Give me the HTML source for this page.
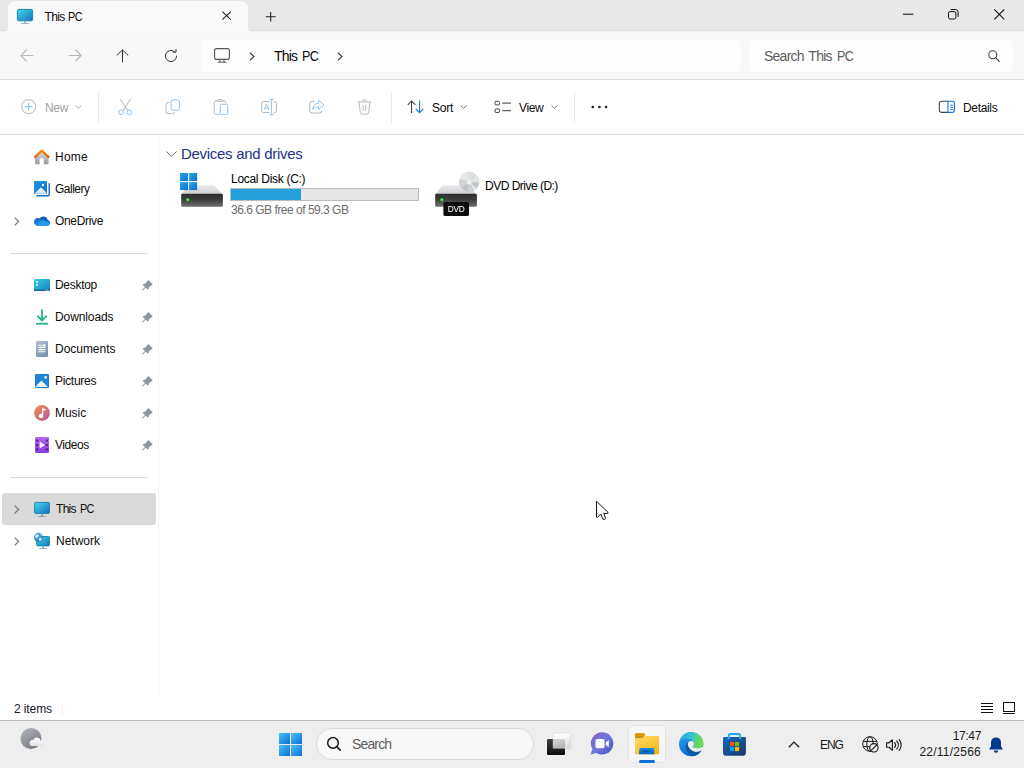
<!DOCTYPE html>
<html><head><meta charset="utf-8"><title>This PC</title>
<style>
*{box-sizing:border-box;margin:0;padding:0}
html,body{width:1024px;height:768px;overflow:hidden;background:#fff;font-family:"Liberation Sans",sans-serif;font-size:12px;color:#0c0c0c}
div,svg,span{position:absolute}
svg{overflow:visible}
#titlebar{left:0;top:0;width:1024px;height:32px;background:#e8e8e8;border-bottom:1px solid #f0f0f0;box-shadow:inset 0 -1px 0 #e1e1e1}
#tab{left:8px;top:1px;width:240px;height:31px;background:#f9f9f9;border-radius:7px 7px 0 0}
#tab:before,#tab:after{content:"";position:absolute;bottom:0;width:4px;height:4px;background:radial-gradient(circle at 0 0,rgba(249,249,249,0) 3.6px,#f9f9f9 4.1px)}
#tab:before{left:-4px}
#tab:after{right:-4px;transform:scaleX(-1)}
#navbar{z-index:2;left:0;top:32px;width:1024px;height:48px;background:#f8f8f8;border-bottom:1px solid #dddddd}
#addr{left:201px;top:8px;width:540px;height:32px;background:#fdfdfd;border-radius:5px}
#search{left:749px;top:8px;width:264px;height:32px;background:#fdfdfd;border-radius:5px}
#toolbar{z-index:2;left:0;top:80px;width:1024px;height:55px;background:#fff;border-bottom:1px solid #dadada}
#sidebar{left:0;top:134px;width:159px;height:563px;background:transparent;border-right:1px solid #f4f4f4}
#content{left:159px;top:134px;width:865px;height:562px;background:transparent}
#status{left:0;top:696px;width:1024px;height:24px;background:#fff}
#taskbar{left:0;top:720px;width:1024px;height:48px;background:#eeeeee;box-shadow:inset 0 1px 0 #bfbfbf}
.t{white-space:nowrap;line-height:16px;height:16px;font-size:12px}
.t span{position:static;display:inline-block;transform-origin:0 50%}
.sep{width:1px;background:#eaeaea}
.hsep{height:1px;background:#dcdcdc}
</style></head><body>

<!-- ===== TITLE BAR ===== -->
<div id="titlebar">
  <div id="tab"></div>
  <svg id="tabicon" style="left:16px;top:8px" width="18" height="18" viewBox="0 0 18 18">
    <defs><linearGradient id="gmon" x1="0" y1="0" x2="1" y2="1"><stop offset="0" stop-color="#3fdcea"/><stop offset="1" stop-color="#1a6fc0"/></linearGradient></defs>
    <rect x="1.400" y="1.400" width="15.200" height="11.400" rx="1.300" fill="url(#gmon)" stroke="#0f7fa6" stroke-width="0.900"/>
    <rect x="8" y="13" width="2" height="2.2" fill="#9fb6c8"/>
    <rect x="5" y="15" width="8" height="1" fill="#9fb6c8"/>
  </svg>
  <span class="t" style="left:44.500px;top:9px;letter-spacing:-0.600px;word-spacing:0.600px">This <span style="transform:scaleX(0.900)">PC</span></span>
  <svg style="left:222px;top:11px" width="10" height="10" viewBox="0 0 10 10"><path d="M0.400 0.600L8.800 8.600M8.800 0.600L0.400 8.600" stroke="#1f1f1f" stroke-width="1.050" fill="none"/></svg>
  <svg style="left:265px;top:11px" width="11" height="11" viewBox="0 0 11 11"><path d="M5.700 0.900V10.500M0.800 5.700H10.700" stroke="#1f1f1f" stroke-width="1.050" fill="none"/></svg>
  <svg style="left:903px;top:9px" width="11" height="11" viewBox="0 0 11 11"><path d="M0 5.200H10.300" stroke="#111" stroke-width="1.050" fill="none"/></svg>
  <svg style="left:948px;top:9px" width="11" height="11" viewBox="0 0 11 11"><rect x="0.5" y="2.6" width="7.4" height="7.4" rx="1.6" fill="none" stroke="#111" stroke-width="1"/><path d="M2.7 0.55H7.6A2.5 2.5 0 0 1 10.1 3.05V7.9" fill="none" stroke="#111" stroke-width="1"/></svg>
  <svg style="left:994px;top:9px" width="11" height="11" viewBox="0 0 11 11"><path d="M0.3 0.3L10.3 10.3M10.3 0.3L0.3 10.3" stroke="#111" stroke-width="1.1" fill="none"/></svg>
</div>

<!-- ===== NAV BAR ===== -->
<div id="navbar">
  <svg style="left:20px;top:17px" width="14" height="13" viewBox="0 0 14 13"><path d="M13 6.5H1.2M6.3 1L0.9 6.5L6.3 12" stroke="#b9b9b9" stroke-width="1.1" fill="none" stroke-linecap="round" stroke-linejoin="round"/></svg>
  <svg style="left:68px;top:17px" width="14" height="13" viewBox="0 0 14 13"><path d="M1 6.5H12.8M7.7 1L13.1 6.5L7.7 12" stroke="#b9b9b9" stroke-width="1.1" fill="none" stroke-linecap="round" stroke-linejoin="round"/></svg>
  <svg style="left:116px;top:17px" width="13" height="14" viewBox="0 0 13 14"><path d="M6.5 13V1.2M1 6.3L6.5 0.9L12 6.3" stroke="#333" stroke-width="1" fill="none" stroke-linecap="round" stroke-linejoin="round"/></svg>
  <svg style="left:164px;top:17px" width="14" height="14" viewBox="0 0 14 14"><path d="M12.6 7A5.6 5.6 0 1 1 10.2 2.4" stroke="#333" stroke-width="1" fill="none" stroke-linecap="round"/><path d="M10.6 0.6V3.4H7.8" stroke="#333" stroke-width="1" fill="none" stroke-linecap="round" stroke-linejoin="round" transform="translate(1.4,-0.2)"/></svg>
  <div id="addr">
    <svg style="left:13px;top:8px" width="16" height="15" viewBox="0 0 16 15"><rect x="0.6" y="0.6" width="14.8" height="10.8" rx="2" fill="none" stroke="#555" stroke-width="1.1"/><path d="M6 11.5V14M10 11.5V14M3.5 14.2H12.5" stroke="#555" stroke-width="1" fill="none"/></svg>
    <svg style="left:48px;top:12px" width="6" height="9" viewBox="0 0 6 9"><path d="M0.8 0.6L5 4.5L0.8 8.4" stroke="#333" stroke-width="1.1" fill="none"/></svg>
    <span class="t" style="left:73px;top:8px;font-size:14px;letter-spacing:-0.800px;word-spacing:1.200px">This <span style="transform:scaleX(0.900)">PC</span></span>
    <svg style="left:136px;top:12px" width="6" height="9" viewBox="0 0 6 9"><path d="M0.8 0.6L5 4.5L0.8 8.4" stroke="#333" stroke-width="1.1" fill="none"/></svg>
  </div>
  <div id="search">
    <span class="t" style="left:15px;top:8px;font-size:14px;letter-spacing:-0.750px;word-spacing:1.600px;color:#5d5d5d">Search This <span style="transform:scaleX(0.900)">PC</span></span>
    <svg style="left:239px;top:18px;top:10px" width="12" height="12" viewBox="0 0 12 12"><circle cx="4.8" cy="4.8" r="4" fill="none" stroke="#444" stroke-width="1.1"/><path d="M7.8 7.8L11.3 11.3" stroke="#444" stroke-width="1.2" stroke-linecap="round"/></svg>
  </div>
</div>

<div id="toolbar">
  <!-- New -->
  <svg style="left:21px;top:19px" width="16" height="16" viewBox="0 0 16 16"><circle cx="7.6" cy="7.6" r="7" fill="none" stroke="#b4b4b4" stroke-width="1"/><path d="M7.6 4V11.2M4 7.6H11.2" stroke="#8cc4ee" stroke-width="1.1" fill="none"/></svg>
  <span class="t" style="left:45px;top:20px;color:#a2a2a2;letter-spacing:-0.3px">New</span>
  <svg style="left:75px;top:25px" width="7" height="4" viewBox="0 0 7 4"><path d="M0.5 0.4L3.5 3.3L6.5 0.4" stroke="#a8a8a8" stroke-width="1" fill="none"/></svg>
  <div class="sep" style="left:98px;top:12px;height:31px"></div>
  <!-- Cut -->
  <svg style="left:118px;top:19px" width="15" height="17" viewBox="0 0 15 17"><path d="M2.2 0.3L9.6 11.4M12.4 0.3L5 11.4" stroke="#b4b4b4" stroke-width="1" fill="none"/><circle cx="3" cy="13.3" r="2.4" fill="none" stroke="#8cc4ee" stroke-width="1"/><circle cx="11.4" cy="13.3" r="2.4" fill="none" stroke="#8cc4ee" stroke-width="1"/></svg>
  <!-- Copy -->
  <svg style="left:165px;top:19px" width="16" height="16" viewBox="0 0 16 16"><path d="M4.4 3.6H3.2A2.2 2.2 0 0 0 1 5.8V12.4A2.2 2.2 0 0 0 3.2 14.6H7.6A2.2 2.2 0 0 0 9.6 13" fill="none" stroke="#b4b4b4" stroke-width="1"/><rect x="6" y="0.9" width="8.4" height="10.4" rx="2.2" fill="none" stroke="#8cc4ee" stroke-width="1"/></svg>
  <!-- Paste -->
  <svg style="left:213px;top:19px" width="16" height="17" viewBox="0 0 16 17"><path d="M6.4 15.4H3A2 2 0 0 1 1.2 13.6V3.6A2 2 0 0 1 3 1.8H4.2M9.8 1.8H11A2 2 0 0 1 12.8 3.6V4.6" fill="none" stroke="#b4b4b4" stroke-width="1"/><path d="M4.4 2.4A1.6 1.6 0 0 1 6 0.6H8A1.6 1.6 0 0 1 9.6 2.4Z" fill="none" stroke="#b4b4b4" stroke-width="1"/><rect x="7.2" y="5.3" width="7.6" height="10.2" rx="1.6" fill="none" stroke="#8cc4ee" stroke-width="1"/></svg>
  <!-- Rename -->
  <svg style="left:261px;top:19px" width="17" height="17" viewBox="0 0 17 17"><path d="M8.6 13.6H2.8A2.2 2.2 0 0 1 0.6 11.4V4.8A2.2 2.2 0 0 1 2.8 2.6H8.6M12.6 2.6H13.4A2.2 2.2 0 0 1 15.6 4.8V11.4A2.2 2.2 0 0 1 13.4 13.6H12.6" fill="none" stroke="#b4b4b4" stroke-width="1"/><path d="M10.6 0.3V15.8M8.6 0.4H12.6M8.6 15.7H12.6" stroke="#8cc4ee" stroke-width="1" fill="none"/><path d="M3.2 11L5.6 4.8L8 11M4 9.1H7.2" stroke="#8cc4ee" stroke-width="0.9" fill="none"/></svg>
  <!-- Share -->
  <svg style="left:309px;top:19px" width="16" height="16" viewBox="0 0 16 16"><path d="M5.6 2.4H3.2A2.4 2.4 0 0 0 0.8 4.8V11.6A2.4 2.4 0 0 0 3.2 14H10.4A2.4 2.4 0 0 0 12.8 11.6V11.2" fill="none" stroke="#b4b4b4" stroke-width="1"/><path d="M9.6 1.2L15 6L9.6 10.6V7.8C6.8 7.6 5 8.6 3.6 10.4C4 6.8 6 4.4 9.6 4Z" fill="none" stroke="#8cc4ee" stroke-width="1" stroke-linejoin="round"/></svg>
  <!-- Delete -->
  <svg style="left:357px;top:19px" width="16" height="16" viewBox="0 0 16 16"><path d="M0.6 3H14.4M5.4 2.8A2.1 2.1 0 0 1 9.6 2.8M2 3.2L3.3 13.6A1.8 1.8 0 0 0 5.1 15.2H9.9A1.8 1.8 0 0 0 11.7 13.6L13 3.2M6.2 6.4V12M8.8 6.4V12" fill="none" stroke="#b9b9b9" stroke-width="1"/></svg>
  <div class="sep" style="left:391px;top:12px;height:31px"></div>
  <!-- Sort -->
  <svg style="left:407px;top:20px" width="18" height="14" viewBox="0 0 18 14"><path d="M4.6 13V1M0.8 4.8L4.6 0.9L8.4 4.8" fill="none" stroke="#3a3a3a" stroke-width="1.05"/><path d="M12.6 0.6V12.6M8.8 8.8L12.6 12.7L16.4 8.8" fill="none" stroke="#1579d3" stroke-width="1.05"/></svg>
  <span class="t" style="left:432px;top:20px;letter-spacing:-0.2px">Sort</span>
  <svg style="left:460px;top:25px" width="7" height="4" viewBox="0 0 7 4"><path d="M0.5 0.4L3.5 3.3L6.5 0.4" stroke="#777" stroke-width="1" fill="none"/></svg>
  <!-- View -->
  <svg style="left:494px;top:20px" width="18" height="14" viewBox="0 0 18 14"><rect x="1" y="1.3" width="4.6" height="3.6" rx="1.3" fill="none" stroke="#3a3a3a" stroke-width="1"/><rect x="1" y="8.9" width="4.6" height="3.6" rx="1.3" fill="none" stroke="#3a3a3a" stroke-width="1"/><path d="M8.2 3.1H17M8.2 10.7H17" stroke="#3a3a3a" stroke-width="1"/></svg>
  <span class="t" style="left:519px;top:20px;letter-spacing:-0.35px">View</span>
  <svg style="left:551px;top:25px" width="7" height="4" viewBox="0 0 7 4"><path d="M0.5 0.4L3.5 3.3L6.5 0.4" stroke="#777" stroke-width="1" fill="none"/></svg>
  <div class="sep" style="left:574px;top:12px;height:31px"></div>
  <svg style="left:591px;top:25px" width="17" height="4" viewBox="0 0 17 4"><circle cx="1.8" cy="2" r="1.35" fill="#222"/><circle cx="8.4" cy="2" r="1.35" fill="#222"/><circle cx="15" cy="2" r="1.35" fill="#222"/></svg>
  <!-- Details -->
  <svg style="left:938px;top:20px" width="18" height="14" viewBox="0 0 18 14"><path d="M9.900 1.200H3.700A2.400 2.400 0 0 0 1.300 3.600V10A2.400 2.400 0 0 0 3.700 12.400H9.900" fill="none" stroke="#444" stroke-width="1.100"/><path d="M9.900 1.200H14.100A2.400 2.400 0 0 1 16.500 3.600V10A2.400 2.400 0 0 1 14.100 12.400H9.900Z" fill="none" stroke="#1579d3" stroke-width="1.100"/><path d="M12.300 5.200H14.900M12.300 7.350H14.900M12.300 9.500H14.900" stroke="#1579d3" stroke-width="1"/></svg>
  <span class="t" style="left:963px;top:20px;letter-spacing:-0.33px">Details</span>
</div>
<div id="sidebar">
  <!-- Home -->
  <svg style="left:34.300px;top:15px" width="16" height="16" viewBox="0 0 16 16"><defs><linearGradient id="gh" x1="0" y1="0" x2="0" y2="1"><stop offset="0" stop-color="#e2e2e2"/><stop offset="1" stop-color="#989898"/></linearGradient><linearGradient id="gr" gradientUnits="userSpaceOnUse" x1="0" y1="0.500" x2="0" y2="9"><stop offset="0" stop-color="#f89c1e"/><stop offset="1" stop-color="#de5a14"/></linearGradient></defs><path d="M1 7.600L7.800 1.800L14.600 7.600V14.100A1.200 1.200 0 0 1 13.400 15.300H9.800V9.300H5.600V15.300H2.200A1.200 1.200 0 0 1 1 14.100Z" fill="url(#gh)"/><path d="M1.100 7.900L7.800 1.700L14.500 7.900" fill="none" stroke="url(#gr)" stroke-width="2.300" stroke-linecap="round" stroke-linejoin="round"/></svg>
  <span class="t" style="left:55px;top:15px;letter-spacing:0.25px">Home</span>
  <!-- Gallery -->
  <svg style="left:34px;top:47px" width="17" height="16" viewBox="0 0 17 16"><defs><linearGradient id="ggal" x1="0" y1="0" x2="1" y2="1"><stop offset="0" stop-color="#2296e6"/><stop offset="1" stop-color="#1670cc"/></linearGradient><linearGradient id="gmt" x1="0" y1="0" x2="0" y2="1"><stop offset="0" stop-color="#ffffff"/><stop offset="1" stop-color="#c4e2f8"/></linearGradient></defs><path d="M15.250 2.300V13.400A1.400 1.400 0 0 1 13.850 14.800H2.400" fill="none" stroke="#1568c2" stroke-width="1.400"/><rect x="0" y="0" width="13" height="13" rx="1.100" fill="url(#ggal)"/><path d="M0.700 12.300L6.300 6.900A1 1 0 0 1 7.700 6.900L12.400 11.600V12A0.700 0.700 0 0 1 11.700 12.700H1.100A0.600 0.600 0 0 1 0.700 12.300Z" fill="url(#gmt)"/><rect x="8" y="2.900" width="2" height="2" fill="#fff"/></svg>
  <span class="t" style="left:55px;top:47px;letter-spacing:-0.5px">Gallery</span>
  <!-- OneDrive -->
  <svg style="left:14px;top:83px" width="6" height="9" viewBox="0 0 6 9"><path d="M0.7 0.6L4.6 4.5L0.7 8.4" stroke="#7c7c7c" stroke-width="1.3" fill="none"/></svg>
  <svg style="left:34px;top:81.200px" width="17" height="11" viewBox="0 0 17 11"><path d="M4.200 10.700H13.200A2.900 2.900 0 0 0 13.800 5A4.500 4.500 0 0 0 5.600 3.600A3.600 3.600 0 0 0 0.300 7.300A3.500 3.500 0 0 0 4.200 10.700Z" fill="#0c5fb6"/><path d="M5.600 3.600A3.600 3.600 0 0 0 0.300 7.300A3.500 3.500 0 0 0 1 9.200L8.600 5.200Z" fill="#1478d2"/><path d="M0.900 9L8.800 4.900L15.700 7.400A2.900 2.900 0 0 1 13.200 10.700H4.200A3.500 3.500 0 0 1 0.900 9Z" fill="#2298e8"/></svg>
  <span class="t" style="left:55px;top:79px;letter-spacing:-0.33px">OneDrive</span>
  <div class="hsep" style="left:10px;top:119px;width:138px"></div>
  <!-- Desktop -->
  <svg style="left:34px;top:145px" width="16" height="12" viewBox="0 0 16 12"><defs><linearGradient id="gd" x1="0" y1="0" x2="1" y2="1"><stop offset="0" stop-color="#34cde6"/><stop offset="1" stop-color="#1480c0"/></linearGradient></defs><rect x="0" y="0" width="16" height="12" rx="1.4" fill="url(#gd)"/><rect x="0" y="10.6" width="16" height="1.4" fill="#106a98"/><rect x="2" y="2.2" width="1.8" height="1.6" fill="#fff"/><rect x="2" y="5.2" width="1.8" height="1.6" fill="#fff"/><rect x="11.6" y="10.8" width="1" height="1" fill="#cfe8f8"/><rect x="13.4" y="10.8" width="1" height="1" fill="#cfe8f8"/></svg>
  <span class="t" style="left:55px;top:143px;letter-spacing:-0.3px">Desktop</span><svg style="left:142px;top:146px" width="11" height="11" viewBox="0 0 11 11"><path d="M6.3 0L10.7 4.3L8.8 6L7.1 7L6.3 9.4L5.4 9.4L3.7 7.6L0.9 10.4L0.2 9.7L3 6.9L0.9 4.9L0.9 4.2L3.4 3.4L4.6 1.7Z" fill="#8e999f"/></svg>
  <!-- Downloads -->
  <svg style="left:36px;top:175px" width="12" height="16" viewBox="0 0 12 16"><path d="M6 0.400V11.200M1.300 6.800L6 11.500L10.700 6.800" fill="none" stroke="#1eb68a" stroke-width="1.800"/><rect x="0" y="13.800" width="12" height="1.800" fill="#1eb68a"/></svg>
  <span class="t" style="left:55px;top:175px;letter-spacing:-0.1px">Downloads</span><svg style="left:142px;top:178px" width="11" height="11" viewBox="0 0 11 11"><path d="M6.3 0L10.7 4.3L8.8 6L7.1 7L6.3 9.4L5.4 9.4L3.7 7.6L0.9 10.4L0.2 9.7L3 6.9L0.9 4.9L0.9 4.2L3.4 3.4L4.6 1.7Z" fill="#8e999f"/></svg>
  <!-- Documents -->
  <svg style="left:36px;top:207px" width="12" height="16" viewBox="0 0 12 16"><defs><linearGradient id="gdoc" x1="0" y1="0" x2="0.6" y2="1"><stop offset="0" stop-color="#b2c2d4"/><stop offset="1" stop-color="#7b90ab"/></linearGradient></defs><rect x="0" y="0" width="12" height="16" rx="1.2" fill="url(#gdoc)"/><path d="M2.4 4.2H5.6M2.4 6.4H9.6M2.4 8.6H9.6M2.4 10.8H9.6" stroke="#fff" stroke-width="1.1"/><rect x="6.6" y="3.4" width="3" height="2" fill="#fff"/></svg>
  <span class="t" style="left:55px;top:207px;letter-spacing:-0.03px">Documents</span><svg style="left:142px;top:210px" width="11" height="11" viewBox="0 0 11 11"><path d="M6.3 0L10.7 4.3L8.8 6L7.1 7L6.3 9.4L5.4 9.4L3.7 7.6L0.9 10.4L0.2 9.7L3 6.9L0.9 4.9L0.9 4.2L3.4 3.4L4.6 1.7Z" fill="#8e999f"/></svg>
  <!-- Pictures -->
  <svg style="left:35px;top:240px" width="14" height="14" viewBox="0 0 14 14"><rect x="0" y="0" width="14" height="14" rx="1.3" fill="#1f86d8"/><path d="M0.4 12.8L6.4 6.6L13.4 13.4A1.3 1.3 0 0 1 12.7 14H1.3A1.3 1.3 0 0 1 0.4 12.8Z" fill="#eef6fd"/><circle cx="10.6" cy="3.4" r="1.3" fill="#fff"/><rect x="0.5" y="0.5" width="13" height="13" rx="1" fill="none" stroke="#1b7ad0" stroke-width="1"/></svg>
  <span class="t" style="left:55px;top:239px;letter-spacing:-0.28px">Pictures</span><svg style="left:142px;top:242px" width="11" height="11" viewBox="0 0 11 11"><path d="M6.3 0L10.7 4.3L8.8 6L7.1 7L6.3 9.4L5.4 9.4L3.7 7.6L0.9 10.4L0.2 9.7L3 6.9L0.9 4.9L0.9 4.2L3.4 3.4L4.6 1.7Z" fill="#8e999f"/></svg>
  <!-- Music -->
  <svg style="left:34px;top:271px" width="16" height="16" viewBox="0 0 16 16"><defs><linearGradient id="gmu" x1="0" y1="0" x2="1" y2="1"><stop offset="0" stop-color="#f28e3e"/><stop offset="1" stop-color="#b85aa8"/></linearGradient></defs><circle cx="8" cy="8" r="7.9" fill="url(#gmu)"/><path d="M8.100 2.900L11.400 3.900V5.800L9.300 5.200V10.800A2.200 2.200 0 1 1 8.100 8.900Z" fill="#fff"/></svg>
  <span class="t" style="left:55px;top:271px;letter-spacing:-0.04px">Music</span><svg style="left:142px;top:274px" width="11" height="11" viewBox="0 0 11 11"><path d="M6.3 0L10.7 4.3L8.8 6L7.1 7L6.3 9.4L5.4 9.4L3.7 7.6L0.9 10.4L0.2 9.7L3 6.9L0.9 4.9L0.9 4.2L3.4 3.4L4.6 1.7Z" fill="#8e999f"/></svg>
  <!-- Videos -->
  <svg style="left:35px;top:303px" width="14" height="16" viewBox="0 0 14 16"><defs><linearGradient id="gv" x1="0" y1="0" x2="0" y2="1"><stop offset="0" stop-color="#b268f4"/><stop offset="1" stop-color="#8a3cd8"/></linearGradient></defs><rect x="0" y="0" width="14" height="16" rx="1.3" fill="url(#gv)"/><path d="M4.6 4.6L10.2 8L4.6 11.4Z" fill="#f3e8fc"/><g fill="#45208c"><rect x="1.200" y="2.600" width="2" height="2"/><rect x="1.200" y="7" width="2" height="2"/><rect x="1.200" y="11.400" width="2" height="2"/><rect x="10.800" y="2.600" width="2" height="2"/><rect x="10.800" y="7" width="2" height="2"/><rect x="10.800" y="11.400" width="2" height="2"/></g></svg>
  <span class="t" style="left:55px;top:303px;letter-spacing:-0.44px">Videos</span><svg style="left:142px;top:306px" width="11" height="11" viewBox="0 0 11 11"><path d="M6.3 0L10.7 4.3L8.8 6L7.1 7L6.3 9.4L5.4 9.4L3.7 7.6L0.9 10.4L0.2 9.7L3 6.9L0.9 4.9L0.9 4.2L3.4 3.4L4.6 1.7Z" fill="#8e999f"/></svg>
  <div class="hsep" style="left:10px;top:343px;width:138px"></div>
  <!-- This PC (selected) -->
  <div style="left:2px;top:359px;width:154px;height:32px;background:#dadada;border-radius:3px"></div>
  <svg style="left:14px;top:371px" width="6" height="9" viewBox="0 0 6 9"><path d="M0.7 0.6L4.6 4.5L0.7 8.4" stroke="#7c7c7c" stroke-width="1.3" fill="none"/></svg>
  <svg style="left:34px;top:368px" width="16" height="15" viewBox="0 0 16 15"><rect x="0.600" y="0.400" width="14.800" height="11" rx="1.200" fill="url(#gmon)" stroke="#0f7fa6" stroke-width="0.900"/><rect x="7" y="11.800" width="2" height="2.400" fill="#94a8b8"/><rect x="4" y="14" width="8" height="1" fill="#94a8b8"/></svg>
  <span class="t" style="left:56px;top:367px;letter-spacing:-0.700px;word-spacing:1.600px">This <span style="transform:scaleX(0.900)">PC</span></span>
  <!-- Network -->
  <svg style="left:14px;top:403px" width="6" height="9" viewBox="0 0 6 9"><path d="M0.7 0.6L4.6 4.5L0.7 8.4" stroke="#7c7c7c" stroke-width="1.3" fill="none"/></svg>
  <svg style="left:34px;top:398px" width="17" height="17" viewBox="0 0 17 17"><defs><radialGradient id="gglobe" cx="0.350" cy="0.300" r="0.800"><stop offset="0" stop-color="#6fb6e8"/><stop offset="1" stop-color="#1f6fb4"/></radialGradient></defs><rect x="2.700" y="4.500" width="12.800" height="9.400" rx="1.100" fill="url(#gmon)" stroke="#0f7fa6" stroke-width="0.900"/><rect x="8.200" y="14.300" width="1.800" height="2" fill="#94a8b8"/><rect x="5.300" y="16" width="7.600" height="1" fill="#94a8b8"/><circle cx="4.500" cy="5.400" r="4.600" fill="url(#gglobe)"/><path d="M1.600 3.200C2.800 2 4.400 2.400 4.600 3.600C4.800 4.800 3.200 5 2.400 6.200C1.600 6.400 0.800 4.400 1.600 3.200ZM5.200 6.400C6.400 5.600 7.800 6 8.200 6.800C7.800 8 7 8.800 5.800 9.200C4.800 8.400 4.600 7 5.200 6.400ZM6.200 1.600C7.200 1.800 8 2.600 8.400 3.600C7.600 3.800 6.600 3.200 6.200 1.600Z" fill="#e4f0fa" fill-opacity="0.900"/></svg>
  <span class="t" style="left:56px;top:399px;letter-spacing:0px">Network</span>
</div>
<div id="content">
  <svg style="left:7px;top:17px" width="11" height="6" viewBox="0 0 11 6"><path d="M0.5 0.5L5.5 5.4L10.5 0.5" fill="none" stroke="#6a6a6a" stroke-width="1"/></svg>
  <span class="t" style="left:22px;top:10px;font-size:15px;line-height:20px;height:20px;color:#1e3287;letter-spacing:-0.29px">Devices and drives</span>
  <!-- Local Disk C -->
  <svg style="left:21px;top:38px" width="44" height="36" viewBox="0 0 44 36">
    <defs>
      <linearGradient id="gtop" x1="0" y1="0" x2="0" y2="1"><stop offset="0" stop-color="#e9eaec"/><stop offset="1" stop-color="#cfd1d4"/></linearGradient>
      <linearGradient id="gfront" x1="0" y1="0" x2="0" y2="1"><stop offset="0" stop-color="#2c2c2c"/><stop offset="0.450" stop-color="#3c3c3c"/><stop offset="1" stop-color="#707070"/></linearGradient><radialGradient id="gled" cx="0.5" cy="0.5" r="0.5"><stop offset="0" stop-color="#7dff7a"/><stop offset="0.550" stop-color="#2fd634"/><stop offset="1" stop-color="#1f9e26" stop-opacity="0.600"/></radialGradient>
      <linearGradient id="gwin" x1="0" y1="0" x2="1" y2="1"><stop offset="0" stop-color="#2aa6ea"/><stop offset="1" stop-color="#0b6fce"/></linearGradient>
    </defs>
    <path d="M8.500 13.300H33.800L42.400 22H1.500Z" fill="url(#gtop)"/>
    <rect x="1.200" y="21.700" width="41.700" height="13" rx="1.300" fill="url(#gfront)"/>
    <circle cx="7.800" cy="27.800" r="2" fill="url(#gled)"/>
    <rect x="0" y="1" width="8" height="8" fill="url(#gwin)"/><rect x="9.100" y="1" width="8" height="8" fill="url(#gwin)"/><rect x="0" y="10.100" width="8" height="8" fill="url(#gwin)"/><rect x="9.100" y="10.100" width="8" height="8" fill="url(#gwin)"/>
  </svg>
  <span class="t" style="left:72px;top:37px;letter-spacing:-0.29px;color:#000">Local Disk (C:)</span>
  <div style="left:71px;top:54px;width:189px;height:13px;background:#e6e6e6;border:1px solid #bcbcbc"><div style="left:0;top:0;width:70px;height:11px;background:#26a0da"></div></div>
  <span class="t" style="left:72px;top:68px;letter-spacing:-0.49px;color:#6d6d6d">36.6 GB free of 59.3 GB</span>
  <!-- DVD Drive D -->
  <svg style="left:275px;top:36px;will-change:transform" width="46" height="46" viewBox="0 0 46 46">
    <defs><radialGradient id="gdisc" cx="0.5" cy="0.5" r="0.5"><stop offset="0" stop-color="#fff"/><stop offset="0.22" stop-color="#f4f4f4"/><stop offset="0.26" stop-color="#c9c9c9"/><stop offset="1" stop-color="#e3e3e3"/></radialGradient></defs>
    <path d="M8.500 15.300H33.800L42.400 24H1.500Z" fill="url(#gtop)"/>
    <g transform="translate(0,0.500)"><circle cx="35.200" cy="11.400" r="9.800" fill="#d6d8da" stroke="#c6c8ca" stroke-width="0.500"/>
    <path d="M35.200 11.400L25.500 10A9.800 9.800 0 0 1 33 1.850Z" fill="#e6e7e8"/>
    <path d="M35.200 11.400L33 1.850A9.800 9.800 0 0 1 41.500 3.900Z" fill="#dddfe0"/>
    <path d="M35.200 11.400L41.500 3.900A9.800 9.800 0 0 1 45 11.800Z" fill="#e2e4e5"/>
    <path d="M35.200 11.400L45 11.800A9.800 9.800 0 0 1 42.300 18.150Z" fill="#c4c7c9"/>
    <path d="M35.200 11.400L42.300 18.150A9.800 9.800 0 0 1 40.600 19.600Z" fill="#f4f5f5"/>
    <path d="M35.200 11.400L40.600 19.600A9.800 9.800 0 0 1 33.500 21.050Z" fill="#cfd2d4"/>
    <path d="M35.200 11.400L33.500 21.050A9.800 9.800 0 0 1 27.200 17.100Z" fill="#c2c5c7"/>
    <path d="M35.200 11.400L27.200 17.100A9.800 9.800 0 0 1 25.500 10Z" fill="#d2d4d6"/>
    <path d="M33 10.800L26 9.200" stroke="#ee9ade" stroke-width="0.700"/><path d="M37 9.600L41.300 4.600" stroke="#a6ecb6" stroke-width="0.700"/>
    <circle cx="35.200" cy="11.400" r="2.900" fill="#f6f6f6" stroke="#c9cbcd" stroke-width="0.600"/><circle cx="35.200" cy="11.400" r="1.200" fill="#e4e5e6"/></g>
    <rect x="1.200" y="23.700" width="41.700" height="13" rx="1.300" fill="url(#gfront)"/>
    <circle cx="7.800" cy="29.800" r="2" fill="url(#gled)"/>
    <rect x="9.400" y="32" width="25.600" height="14" rx="1.600" fill="#0d0d0d"/>
    <text x="22.200" y="42.200" font-family="Liberation Sans,sans-serif" font-size="8.300" fill="#fff" text-anchor="middle" letter-spacing="-0.200">DVD</text>
  </svg>
  <span class="t" style="left:326px;top:44px;letter-spacing:-0.51px;color:#000">DVD Drive (D:)</span>
  <!-- cursor -->
  <svg style="left:436px;top:366px" width="14" height="21" viewBox="0 0 14 21"><path d="M1.500 1.300V17.300H2.700L5.700 14L8 19.200L9.600 19.500L10.600 18.100L8.700 13.400H12.900V12.200Z" fill="#fff" stroke="#14141e" stroke-width="1" stroke-linejoin="round"/></svg>
</div>
<div id="status">
  <span class="t" style="left:14px;top:5px;letter-spacing:-0.11px;color:#14142a">2 items</span>
  <div class="sep" style="left:62px;top:7px;height:11px;background:#ededed"></div>
  <svg style="left:981px;top:7px" width="12" height="11" viewBox="0 0 12 11"><path d="M0 0.500H12M0 3.500H12M0 6.500H12M0 9.500H12" stroke="#111" stroke-width="1"/></svg>
  <svg style="left:1003px;top:6px" width="12" height="12" viewBox="0 0 12 12"><rect x="0.500" y="0.500" width="11" height="9" fill="none" stroke="#111" stroke-width="1"/><path d="M0 11.500H12" stroke="#111" stroke-width="1"/></svg>
</div>
<div id="taskbar">
  <!-- weather -->
  <svg style="left:20px;top:7px" width="24" height="23" viewBox="0 0 24 23">
    <defs><linearGradient id="gmoon" x1="0" y1="0" x2="0.7" y2="1"><stop offset="0" stop-color="#b4b8be"/><stop offset="1" stop-color="#74787f"/></linearGradient><linearGradient id="gcl" x1="0" y1="0" x2="0" y2="1"><stop offset="0" stop-color="#fff"/><stop offset="1" stop-color="#dfe2e8"/></linearGradient></defs>
    <circle cx="11" cy="11.500" r="10.500" fill="url(#gmoon)"/>
    <path d="M12.300 19H20.500A2.600 2.600 0 0 0 20.700 13.800A3.900 3.900 0 0 0 13.300 12.900A3.100 3.100 0 0 0 9.600 16.300A2.700 2.700 0 0 0 12.300 19Z" fill="url(#gcl)"/>
  </svg>
  <!-- start -->
  <svg style="left:279px;top:13px" width="23" height="23" viewBox="0 0 23 23"><defs><linearGradient id="gst" x1="0" y1="0" x2="1" y2="1"><stop offset="0" stop-color="#4cc2f4"/><stop offset="1" stop-color="#0a6fd6"/></linearGradient></defs><rect x="0" y="0" width="11" height="11" fill="url(#gst)"/><rect x="12" y="0" width="11" height="11" fill="url(#gst)"/><rect x="0" y="12" width="11" height="11" fill="url(#gst)"/><rect x="12" y="12" width="11" height="11" fill="url(#gst)"/></svg>
  <!-- search pill -->
  <div style="left:316px;top:8px;width:218px;height:32px;border-radius:16px;background:#f8f8f8;border:1px solid #dadada"></div>
  <svg style="left:326px;top:17px" width="16" height="15" viewBox="0 0 16 15"><circle cx="7" cy="5.900" r="5.300" fill="none" stroke="#1c1c1c" stroke-width="1.500"/><path d="M10.800 9.700L14.200 13.200" stroke="#1c1c1c" stroke-width="1.700" stroke-linecap="round"/></svg>
  <span class="t" style="left:352px;top:16px;font-size:14px;letter-spacing:-0.85px;color:#5e5e5e">Search</span>
  <!-- task view -->
  <svg style="left:547px;top:13px" width="24" height="22" viewBox="0 0 24 22"><defs><linearGradient id="gtv1" x1="0" y1="0" x2="0" y2="1"><stop offset="0" stop-color="#3e3e3e"/><stop offset="1" stop-color="#0c0c0c"/></linearGradient><linearGradient id="gtv2" x1="0" y1="0" x2="0.300" y2="1"><stop offset="0" stop-color="#ffffff"/><stop offset="0.400" stop-color="#fbfbfb"/><stop offset="1" stop-color="#d8d8d8"/></linearGradient></defs><rect x="0" y="6" width="18" height="16" rx="1.200" fill="url(#gtv1)"/><rect x="5.900" y="0" width="17.700" height="15.600" rx="1.200" fill="url(#gtv2)" fill-opacity="0.800" stroke="#bdbdbd" stroke-opacity="0.450" stroke-width="0.600"/></svg>
  <!-- chat -->
  <svg style="left:590.400px;top:12.400px" width="24" height="23" viewBox="0 0 24 23"><defs><linearGradient id="gch" x1="0" y1="0" x2="1" y2="1"><stop offset="0" stop-color="#8a62c6"/><stop offset="0.500" stop-color="#6f78dc"/><stop offset="1" stop-color="#4650c4"/></linearGradient></defs><path d="M12.100 0.200A11.200 11.200 0 1 1 6.200 20.900L0.600 22.600L2.400 17A11.200 11.200 0 0 1 12.100 0.200Z" fill="url(#gch)"/><rect x="5.500" y="7" width="9" height="9.200" rx="1.800" fill="#fff"/><path d="M15.800 10.400L18.800 8V15.300L15.800 12.900Z" fill="#fff"/></svg>
  <!-- explorer (active) -->
  <div style="left:628px;top:5px;width:38px;height:38px;border-radius:5px;background:#f6f6f6;border:1px solid #e3e3e3"></div>
  <svg style="left:634.900px;top:12.900px" width="24.100" height="21.300" viewBox="0 0 24.100 21.300"><defs><linearGradient id="gfo" x1="0.200" y1="0" x2="0.800" y2="1"><stop offset="0" stop-color="#ffd966"/><stop offset="1" stop-color="#f7b512"/></linearGradient><linearGradient id="gfb" x1="0" y1="0" x2="0" y2="1"><stop offset="0" stop-color="#1490e6"/><stop offset="1" stop-color="#0a66c0"/></linearGradient><linearGradient id="gft" x1="0" y1="0" x2="0" y2="1"><stop offset="0" stop-color="#e2a606"/><stop offset="1" stop-color="#c48a00"/></linearGradient></defs>
  <path d="M0 1.300A1.300 1.300 0 0 1 1.300 0H8.600A1 1 0 0 1 9.400 0.400L10.300 1.500L8 5.200H0Z" fill="url(#gft)"/>
  <path d="M0 4.900H7.200A1 1 0 0 0 7.900 4.600L9.500 3.200A1 1 0 0 1 10.200 2.900H23A1.100 1.100 0 0 1 24.100 4V20.200A1.100 1.100 0 0 1 23 21.300H1.100A1.100 1.100 0 0 1 0 20.200Z" fill="url(#gfo)"/>
  <path d="M4.100 21.300V16.900A2 2 0 0 1 6.100 14.900H17.300A2 2 0 0 1 19.300 16.900V21.300Z" fill="url(#gfb)"/>
  <rect x="7.400" y="17.600" width="8.800" height="1.300" rx="0.650" fill="#0b56a4"/></svg>
  <div style="left:639px;top:40px;width:16px;height:3px;border-radius:1.500px;background:#0a6fd6"></div>
  <!-- edge -->
  <svg style="left:678.900px;top:11.600px" width="24.400" height="24.400" viewBox="0 0 24.400 24.400"><defs><linearGradient id="ged1" x1="0.200" y1="0" x2="0.600" y2="1"><stop offset="0" stop-color="#2aa4ee"/><stop offset="1" stop-color="#0a62c6"/></linearGradient><linearGradient id="ged2" x1="0" y1="0.300" x2="1" y2="0.500"><stop offset="0" stop-color="#27a8ea"/><stop offset="0.500" stop-color="#36c4cc"/><stop offset="0.850" stop-color="#62dc5c"/><stop offset="1" stop-color="#6ee24c"/></linearGradient></defs>
  <circle cx="12.200" cy="12.200" r="12.100" fill="url(#ged1)"/>
  <path d="M0.300 10A12.100 12.100 0 0 1 24.300 12.200C24.300 13.400 23.800 14.300 23.100 14.900C21.500 16 18.500 16.400 16.500 16C15 15.700 13.800 15.200 13.200 14.700C14.600 13.600 15 11.500 14 9.600C12.600 7.200 9.500 6.200 6.500 6.600C3.500 7 1.200 8.600 0.300 10Z" fill="url(#ged2)"/>
  <path d="M9.200 9.900C7.500 10.800 6.700 13 7 15.500C7.500 19.500 10 23 13 24.300A12.100 12.100 0 0 0 22.500 18.500C20.500 19.700 17.500 20 15.400 19.600C12.300 18.900 9.300 16.200 8.900 12.600C8.800 11.500 8.900 10.600 9.200 9.900Z" fill="#0c57a4"/>
  <path d="M11.900 9A3.100 3.100 0 0 1 15 12.100C15 13.200 14.200 14.200 13.200 14.700C13.800 15.200 15 15.700 16.500 16C18.500 16.400 21.500 16 23.100 14.900L24.700 15.300L24.700 17.700L22.500 18.500C20.500 19.700 17.500 20 15.400 19.600C12.300 18.900 9.300 16.200 8.900 12.600A3.100 3.100 0 0 1 11.900 9Z" fill="#eeeeee"/></svg>
  <!-- store -->
  <svg style="left:723px;top:13px" width="23" height="23" viewBox="0 0 23 23"><defs><linearGradient id="gsto" x1="0" y1="0" x2="1" y2="1"><stop offset="0" stop-color="#1568be"/><stop offset="1" stop-color="#1a3768"/></linearGradient><linearGradient id="gsth" x1="0" y1="0" x2="0" y2="1"><stop offset="0" stop-color="#1aa0f4"/><stop offset="1" stop-color="#4accf8"/></linearGradient></defs>
  <path d="M5.800 5.600V2.600A1.600 1.600 0 0 1 7.400 1H15.600A1.600 1.600 0 0 1 17.200 2.600V5.600" fill="none" stroke="url(#gsth)" stroke-width="2"/>
  <path d="M1.200 4H21.700A1.200 1.200 0 0 1 22.900 5.200V19.400A3.400 3.400 0 0 1 19.500 22.800H3.400A3.400 3.400 0 0 1 0 19.400V5.200A1.200 1.200 0 0 1 1.200 4Z" fill="url(#gsto)"/>
  <path d="M5.800 4V5.800M17.200 4V5.800" stroke="url(#gsth)" stroke-width="2"/>
  <rect x="7" y="9" width="4.100" height="4.100" fill="#f25022"/><rect x="12" y="9" width="4.100" height="4.100" fill="#7fba00"/><rect x="7" y="14" width="4.100" height="4.100" fill="#00a4ef"/><rect x="12" y="14" width="4.100" height="4.100" fill="#ffb900"/></svg>
  <!-- tray -->
  <svg style="left:788px;top:21px" width="12" height="7" viewBox="0 0 12 7"><path d="M0.800 6.300L6 1.100L11.200 6.300" fill="none" stroke="#1c1c1c" stroke-width="1.300"/></svg>
  <span class="t" style="left:820px;top:17px;letter-spacing:-1.100px;color:#1c1c1c">ENG</span>
  <svg style="left:862px;top:16px" width="17" height="17" viewBox="0 0 17 17"><circle cx="8" cy="8" r="7.300" fill="none" stroke="#1c1c1c" stroke-width="1"/><ellipse cx="8" cy="8" rx="3.200" ry="7.300" fill="none" stroke="#1c1c1c" stroke-width="1"/><path d="M1.200 5.400H14.800M1.200 10.600H8" stroke="#1c1c1c" stroke-width="1" fill="none"/><circle cx="11.900" cy="11.800" r="4.200" fill="#eee" stroke="#1c1c1c" stroke-width="1.100"/><path d="M9 14.700L14.800 8.900" stroke="#1c1c1c" stroke-width="1.100"/></svg>
  <svg style="left:886px;top:19px" width="17" height="12" viewBox="0 0 17 12"><path d="M0.600 3.800H3L6.400 0.800V11.200L3 8.200H0.600Z" fill="none" stroke="#1c1c1c" stroke-width="1.150" stroke-linejoin="round"/><path d="M8.600 3.600A3.600 3.600 0 0 1 8.600 8.400M10.800 2A6 6 0 0 1 10.800 10M13.200 0.600A8.400 8.400 0 0 1 13.200 11.400" fill="none" stroke="#1c1c1c" stroke-width="1.150" stroke-linecap="round"/></svg>
  <span class="t" style="right:43px;top:8px;letter-spacing:-0.360px;color:#1c1c1c">17:47</span>
  <span class="t" style="right:43px;top:24px;letter-spacing:0.240px;color:#1c1c1c">22/11/2566</span>
  <svg style="left:989px;top:17px" width="14" height="16" viewBox="0 0 14 16"><path d="M7 0.400A5 5 0 0 1 12 5.400V9.200L13.600 11.800A0.600 0.600 0 0 1 13 12.600H1A0.600 0.600 0 0 1 0.400 11.800L2 9.200V5.400A5 5 0 0 1 7 0.400Z" fill="#003a8c"/><path d="M4.800 13.600H9.200A2.200 2.200 0 0 1 4.800 13.600Z" fill="#003a8c"/></svg>
</div>
</body></html>
